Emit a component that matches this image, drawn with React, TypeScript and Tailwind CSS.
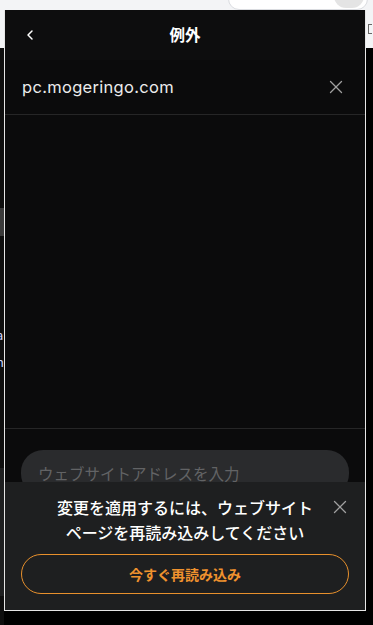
import { ChevronLeft, X } from 'lucide-react'

const jp = { fontFamily: '"Noto Sans CJK JP", "Noto Sans", sans-serif' }

export default function App() {
  return (
    <div className="relative w-[373px] h-[625px] bg-black overflow-hidden" style={jp}>
      {/* page behind the popup */}
      <div className="absolute inset-x-0 top-0 h-[48px] bg-[#f3f4f6]">
        <div className="absolute left-[228px] -top-[12px] w-[140px] h-[22px] rounded-full bg-white border border-[#dadce0]" />
        <div className="absolute left-[334px] -top-[16px] w-[30px] h-[24px] rounded-full bg-[#e4e4e4]" />
        <div className="absolute left-[368px] top-[24px] w-[4px] h-[10px] border border-[#666] border-r-0" />
      </div>
      <div className="absolute left-0 top-[48px] w-[4px] h-[577px] bg-[#0e0e0e]">
        <div className="mt-[160px] h-[28px] bg-[#3a3a3a]" />
        <div className="mt-[92px] text-[13px] leading-none text-[#cfd6ff] -ml-[4px]">a</div>
        <div className="mt-[14px] text-[13px] leading-none text-[#cfd6ff] -ml-[4px]">n</div>
        <div className="mt-[100px] h-[128px] bg-[#1e1f20]" />
      </div>

      {/* popup */}
      <div className="absolute left-[4px] top-[10px] w-[362px] h-[601px] border border-t-0 border-[#e6e6e6] bg-[#0b0b0c] flex flex-col">
        <div className="relative h-[50px] shrink-0 flex items-center justify-center bg-[#0d0d0e]">
          <ChevronLeft className="absolute left-[17px] top-[17px] w-[16px] h-[16px] text-white" strokeWidth={2.2} />
          <span className="text-[15.5px] font-bold text-white">例外</span>
        </div>
        <div className="h-[55px] shrink-0 flex items-center justify-between pl-[17px] pr-[18px] border-b border-[#262627]">
          <span className="text-[16.5px] text-[#ececec] tracking-[0.3px]" style={{ fontFamily: 'Inter, "Noto Sans", sans-serif' }}>
            pc.mogeringo.com
          </span>
          <X className="w-[22px] h-[22px] text-[#a0a0a0]" strokeWidth={1.4} />
        </div>
        <div className="flex-1" />
        <div className="h-[182px] shrink-0 border-t border-[#262627] px-[16px] pt-[21px] relative">
          <div className="h-[46px] rounded-[22px] bg-[#2a2b2d] flex items-center px-[17px] pt-[2px]">
            <span className="text-[15.5px] text-[#626365]">ウェブサイトアドレスを入力</span>
          </div>

          {/* reload toast */}
          <div className="absolute left-0 right-0 bottom-0 h-[128px] bg-[#1e1f20] px-[16px] pt-[13px]">
            <div className="relative flex justify-center">
              <p className="text-[16px] leading-[25px] font-medium text-white text-center">
                変更を適用するには、ウェブサイト
                <br />
                ページを再読み込みしてください
              </p>
              <X className="absolute right-[-2px] top-[1px] w-[22px] h-[22px] text-[#a0a0a0]" strokeWidth={1.4} />
            </div>
            <button className="mt-[9px] w-full h-[40px] rounded-full border border-[#e8902c] text-[14px] font-bold text-[#f0922e]">
              今すぐ再読み込み
            </button>
          </div>
        </div>
      </div>
    </div>
  )
}
